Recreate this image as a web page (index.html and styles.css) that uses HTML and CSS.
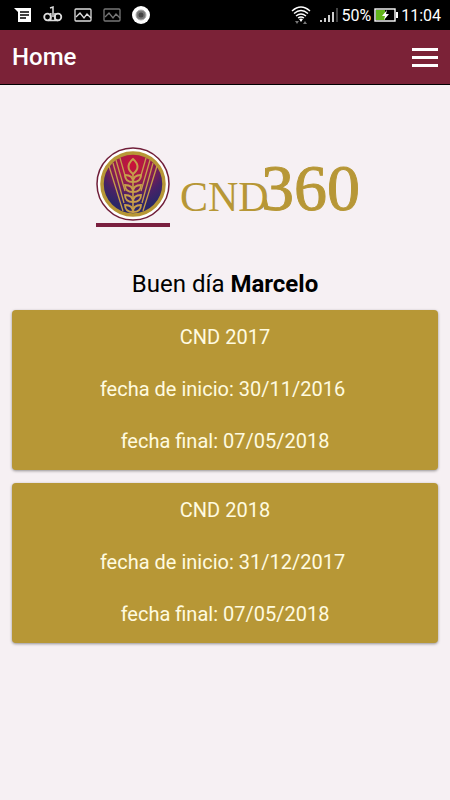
FILE: index.html
```html
<!DOCTYPE html>
<html lang="es">
<head>
  <meta charset="UTF-8">
  <meta name="viewport" content="width=device-width, initial-scale=1.0">
  <title>CND 360</title>
  <link rel="stylesheet" href="styles.css">
</head>
<body>

  <div class="status-bar">
    <div class="status-left">
      <svg width="18" height="16" viewBox="0 0 18 16"><path fill="#fff" d="M0 1h17v14H4V5z"/><path stroke="#000" stroke-width="1.3" d="M6 5h9M6 8h9M6 11h6"/></svg>
      <svg width="20" height="20" viewBox="0 0 20 20" fill="none" stroke="#ddd"><circle cx="4.500" cy="12" r="3.300" stroke-width="1.800"/><circle cx="15" cy="12" r="3.300" stroke-width="1.800"/><path d="M7 3l3-1v10M5 15.500h10M7.800 8v8M12 8v8" stroke-width="1.500"/></svg>
      <svg width="18" height="14" viewBox="0 0 18 14" fill="none" stroke="#ddd" stroke-width="1.3"><rect x="1" y="1" width="16" height="12" rx="1"/><path d="M2 9l4-4 4 5 3-4 4 4"/></svg>
      <svg width="18" height="14" viewBox="0 0 18 14" fill="none" stroke="#777" stroke-width="1.3"><rect x="1" y="1" width="16" height="12" rx="1"/><path d="M2 9l4-4 4 5 3-4 4 4"/></svg>
      <svg width="18" height="18" viewBox="0 0 18 18"><circle cx="9" cy="9" r="9" fill="#fff"/><circle cx="9" cy="9" r="5" fill="#777" stroke="#aaa"/><circle cx="9" cy="9" r="2.500" fill="#444"/></svg>
    </div>
    <div class="status-right">
      <svg width="20" height="20" viewBox="0 0 20 20" fill="none" stroke="#fff" stroke-width="1.400"><path d="M1 6q9-8 18 0M3 8.500q7-6 14 0M5 11q5-4 10 0M7 13q3-2 6 0"/><path d="M10 17l-2-3q2-1 4 0z" fill="#fff" stroke="none"/><path d="M4 16h4l-2 3zM12 19h4l-2-3z" fill="#777" stroke="none"/></svg>
      <svg class="signal" width="18" height="16" viewBox="0 0 18 16" stroke-width="1.600"><path stroke="#fff" d="M1 15v-2M5 15v-4M9 15V8M13 15V5"/><path stroke="#555" d="M17 15V1"/></svg>
      <span>50%</span>
      <svg width="24" height="14" viewBox="0 0 24 14"><rect x="1" y="1" width="20" height="12" fill="#000" stroke="#fff" stroke-width="1.400"/><path fill="#63b51b" d="M2 2h9v10H2z"/><path fill="#fff" d="M22 4h2v6h-2zM13 2L8 8h3l-1 4 5-6h-3z"/></svg>
      <span>11:04</span>
    </div>
  </div>

  <header>
    <h1>Home</h1>
    <button class="menu-button" aria-label="Menú">
      <span></span>
      <span></span>
      <span></span>
    </button>
  </header>

  <main>
    <svg class="logo" width="258" height="80" viewBox="0 0 258 80" role="img" aria-label="CND 360">
      <defs>
        <radialGradient id="sky" cx="50%" cy="18%" r="70%">
          <stop offset="0" stop-color="#cc1237"/>
          <stop offset="0.35" stop-color="#a51b48"/>
          <stop offset="0.75" stop-color="#482266"/>
          <stop offset="1" stop-color="#2b2768"/>
        </radialGradient>
      </defs>
      <circle cx="37" cy="37" r="36" fill="#fff" stroke="#701e39" stroke-width="1.500"/>
      <circle cx="37" cy="37" r="31" fill="url(#sky)" stroke="#b79736" stroke-width="3.500"/>
      <!-- wheat -->
      <g fill="none" stroke="#c79e4b" stroke-width="1.300">
        <path d="M13 19L27 64M17 16L28 56M20 13L29 44M24 11L30 32M61 19L47 64M57 16L46 56M54 13L45 44M50 11L44 32"/>
        <path d="M37 26v40" stroke-width="1.600"/>
        <path stroke-width="2" d="M37 12q-9 8 0 15q9-7 0-15z"/>
        <path id="grain" stroke-width="1.800" d="M37 35q-8 0-8-7q8 0 8 7zM37 35q8 0 8-7q-8 0-8 7z"/>
        <use href="#grain" y="10"/>
        <use href="#grain" y="20"/>
        <use href="#grain" y="30"/>
      </g>
      <path fill="#7a1f3f" d="M0 76h74v4H0z"/>
      <text class="logo-name" x="84" y="64">CND</text>
      <text class="logo-number" x="165" y="63">360</text>
    </svg>

    <h2>Buen día <strong>Marcelo</strong></h2>

    <button class="card">
      <span>CND 2017</span>
      <span>fecha de inicio: 30/11/2016&nbsp;</span>
      <span>fecha final: 07/05/2018</span>
    </button>
    <button class="card">
      <span>CND 2018</span>
      <span>fecha de inicio: 31/12/2017&nbsp;</span>
      <span>fecha final: 07/05/2018</span>
    </button>
  </main>

</body>
</html>
```
FILE: styles.css
```css
* {
  box-sizing: border-box;
}

body {
  margin: 0;
  background-color: #f6f0f3;
  color: #000;
  font-family: Roboto, sans-serif;
}

.status-bar {
  display: flex;
  justify-content: space-between;
  align-items: center;
  height: 30px;
  padding: 0 9px 0 14px;
  background-color: #000;
  color: #fff;
  font-size: 16px;
}

.status-left {
  display: flex;
  align-items: center;
  gap: 11px;
}

.status-right {
  display: flex;
  align-items: center;
  gap: 3px;
}

.signal {
  margin-left: 6px;
}

header {
  display: flex;
  justify-content: space-between;
  align-items: center;
  height: 55px;
  padding: 0 12px;
  background-color: #7b2237;
  border-bottom: 1px solid #000;
  color: #fff;
}

h1 {
  margin: 0;
  font-size: 24px;
  font-weight: 500;
}

.menu-button {
  display: flex;
  flex-direction: column;
  gap: 5px;
  width: 26px;
  padding: 0;
  background: none;
  border: none;
  cursor: pointer;
}

.menu-button span {
  height: 3px;
  background-color: #fff;
}

main {
  padding: 62px 12px 12px;
}

.logo {
  display: block;
  margin: 0 auto;
  overflow: visible;
}

.logo text {
  font-family: "Liberation Serif", serif;
  fill: #b79736;
  stroke: #b79736;
}

.logo-name {
  font-size: 42px;
  stroke-width: 0;
}

.logo-number {
  font-size: 66px;
  stroke-width: 1px;
}

h2 {
  margin: 41px 0 10px;
  font-size: 24px;
  font-weight: 400;
  line-height: 32px;
  text-align: center;
}

h2 strong {
  font-weight: 700;
}

.card {
  display: flex;
  flex-direction: column;
  align-items: center;
  gap: 28px;
  width: 100%;
  margin-bottom: 13px;
  padding: 15px 16px 17px;
  background-color: #b79736;
  border: none;
  border-radius: 4px;
  box-shadow: 0 1px 3px rgba(0, 0, 0, 0.4);
  color: #fffbe0;
  font-family: inherit;
  font-size: 20px;
  line-height: 24px;
  cursor: pointer;
}
```
